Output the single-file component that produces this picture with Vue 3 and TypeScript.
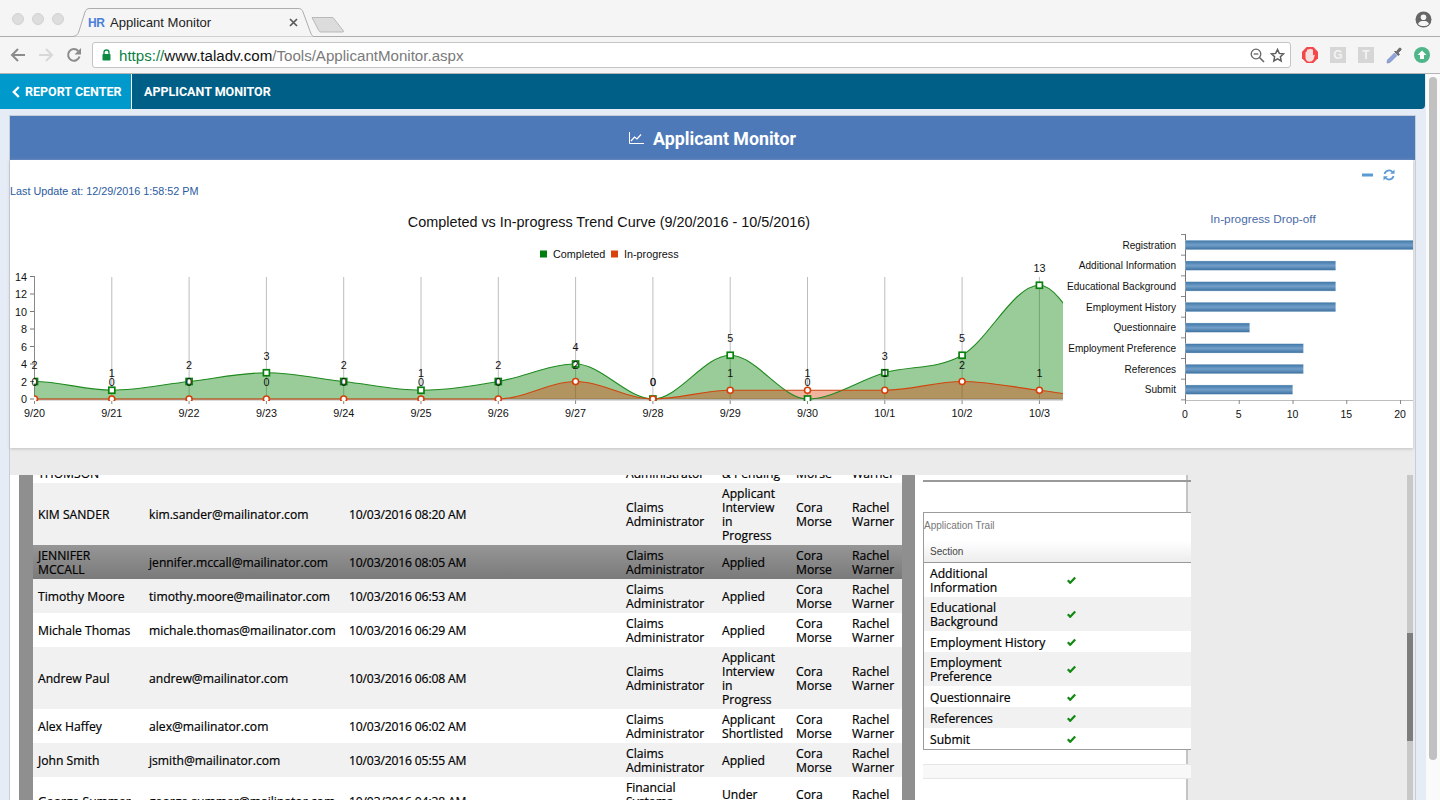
<script setup lang="ts">
const X0 = 34.5, STEP = 77.3, Y0 = 399, UNIT = 8.75
const dates = ['9/20','9/21','9/22','9/23','9/24','9/25','9/26','9/27','9/28','9/29','9/30','10/1','10/2','10/3']
const completed = [2,1,2,3,2,1,2,4,0,5,0,3,5,13]
const inProgress = [0,0,0,0,0,0,0,2,0,1,1,1,2,1]
const px = (i: number) => X0 + STEP * i
const py = (v: number) => Y0 - UNIT * v

function spline(vals: number[]): string {
  const n = vals.length
  const m = vals.map((v, i) => {
    if (i === 0 || i === n - 1) return 0
    const a = v - vals[i - 1], b = vals[i + 1] - v
    if (a * b <= 0) return 0
    const s = Math.sign(a)
    return s * Math.min((Math.abs(a) + Math.abs(b)) / 2, 3 * Math.min(Math.abs(a), Math.abs(b)))
  })
  let d = `M${px(0)} ${py(vals[0])}`
  for (let i = 0; i < n - 1; i++) {
    d += ` C${px(i) + STEP / 3} ${py(vals[i] + m[i] / 3)} ${px(i + 1) - STEP / 3} ${py(vals[i + 1] - m[i + 1] / 3)} ${px(i + 1)} ${py(vals[i + 1])}`
  }
  return d
}
const greenLine = spline([...completed, 4])
const redLine = spline([...inProgress, 0])
const close = ` L${px(14)} ${Y0} L${px(0)} ${Y0} Z`
const greenArea = greenLine + close
const redArea = redLine + close

const yTicks = [0, 2, 4, 6, 8, 10, 12, 14]
const dropoff = [
  { name: 'Registration', v: 26 },
  { name: 'Additional Information', v: 14 },
  { name: 'Educational Background', v: 14 },
  { name: 'Employment History', v: 14 },
  { name: 'Questionnaire', v: 6 },
  { name: 'Employment Preference', v: 11 },
  { name: 'References', v: 11 },
  { name: 'Submit', v: 10 }
]
const BX = 1185, BU = 10.75
const barY = (i: number) => 245 + 20.67 * i
const barTicks = [0,1,2,3,4,5,6,7,8].map(i => 234.5 + 20.67 * i)

interface Row { name: string; email: string; date: string; role: string; status: string; rec: string; mgr: string; cls?: string }
const base = { role: 'Claims\nAdministrator', rec: 'Cora\nMorse', mgr: 'Rachel\nWarner' }
const interview = 'Applicant\nInterview\nin\nProgress'
const rows: Row[] = [
  { ...base, name: 'MARK\nTHOMSON', email: 'mark.thomson@mailinator.com', date: '10/03/2016 09:10 AM', status: 'Selected\n& Pending', cls: 'plain' },
  { ...base, name: 'KIM SANDER', email: 'kim.sander@mailinator.com', date: '10/03/2016 08:20 AM', status: interview, cls: 'alt' },
  { ...base, name: 'JENNIFER\nMCCALL', email: 'jennifer.mccall@mailinator.com', date: '10/03/2016 08:05 AM', status: 'Applied', cls: 'sel' },
  { ...base, name: 'Timothy Moore', email: 'timothy.moore@mailinator.com', date: '10/03/2016 06:53 AM', status: 'Applied', cls: 'alt' },
  { ...base, name: 'Michale Thomas', email: 'michale.thomas@mailinator.com', date: '10/03/2016 06:29 AM', status: 'Applied', cls: 'plain' },
  { ...base, name: 'Andrew Paul', email: 'andrew@mailinator.com', date: '10/03/2016 06:08 AM', status: interview, cls: 'alt' },
  { ...base, name: 'Alex Haffey', email: 'alex@mailinator.com', date: '10/03/2016 06:02 AM', status: 'Applicant\nShortlisted', cls: 'plain' },
  { ...base, name: 'John Smith', email: 'jsmith@mailinator.com', date: '10/03/2016 05:55 AM', status: 'Applied', cls: 'alt' },
  { ...base, name: 'George Summer', email: 'george.summer@mailinator.com', date: '10/03/2016 04:38 AM', role: 'Financial\nSystems\nAnalyst', status: 'Under\nReview', cls: 'plain' }
]
const trail = ['Additional\nInformation', 'Educational\nBackground', 'Employment History', 'Employment\nPreference', 'Questionnaire', 'References', 'Submit']
</script>

<template>
  <div class="window">
    <header class="tabstrip">
      <div class="lights"><i></i><i></i><i></i></div>
      <div class="tab">
        <svg class="tab-shape" width="242" height="29" viewBox="0 0 242 29"><path d="M0.5 28.5 C5 28 6 26 7 23 L13 4 C14 1.5 15 0.5 18 0.5 H226 C229 0.5 230 1.5 231 4 L238 23 C239 26 240 28 241.500 28.500" fill="#f5f5f5" stroke="#adadad"/></svg>
        <span class="favicon">HR</span>
        <span class="tab-title">Applicant Monitor</span>
        <svg class="tab-x" width="9" height="9" viewBox="0 0 9 9"><path d="M1 1L8 8M8 1L1 8" stroke="#5a5a5a" stroke-width="1.700"/></svg>
      </div>
      <svg class="newtab" width="34" height="17" viewBox="0 0 34 17"><path d="M1 1.500 H22 L32.500 15 Q33 16 31 16 H10 Q8.500 16 8 15 Z" fill="#dcdcdc" stroke="#b9b9b9"/></svg>
      <svg class="account" width="17" height="17" viewBox="0 0 17 17"><circle cx="8.500" cy="8.500" r="8" fill="#666"/><circle cx="8.500" cy="6.300" r="2.800" fill="#f5f5f5"/><path d="M3 13 C4 10.500 6 10 8.500 10 C11 10 13 10.500 14 13 C12.500 14.700 10.500 15 8.500 15 C6.500 15 4.500 14.700 3 13Z" fill="#f5f5f5"/></svg>
    </header>
    <div class="toolbar">
      <svg class="nav-ic" width="16" height="16" viewBox="0 0 16 16"><path d="M15 8H2.500M8 2L2 8l6 6" fill="none" stroke="#8c8c8c" stroke-width="2"/></svg>
      <svg class="nav-ic fwd" width="16" height="16" viewBox="0 0 16 16"><path d="M1 8h12.500M8 2l6 6-6 6" fill="none" stroke="#d8d8d8" stroke-width="2"/></svg>
      <svg class="nav-ic rel" width="16" height="16" viewBox="0 0 16 16"><path d="M13.500 9.500A5.800 5.800 0 1 1 12.200 4" fill="none" stroke="#8c8c8c" stroke-width="2"/><path d="M15 1v6.500H8.500z" fill="#8c8c8c"/></svg>
      <div class="omnibox">
        <svg width="9" height="12" viewBox="0 0 9 12"><path d="M2 5V3.500a2.500 2.500 0 0 1 5 0V5" fill="none" stroke="#0b8a43" stroke-width="1.300"/><rect x="0.500" y="5" width="8" height="6.500" rx="0.800" fill="#0b8a43"/></svg>
        <span class="url"><span class="u-g">https://</span><span class="u-b">www.taladv.com</span><span class="u-m">/Tools/ApplicantMonitor.aspx</span></span>
        <svg class="zoom-ic" width="15" height="15" viewBox="0 0 15 15"><circle cx="6" cy="6" r="4.800" fill="none" stroke="#666" stroke-width="1.300"/><path d="M9.500 9.500L14 14" stroke="#666" stroke-width="1.600"/><path d="M3.700 6h4.600" stroke="#666" stroke-width="1.300"/></svg>
        <svg width="15" height="15" viewBox="0 0 15 15"><path d="M7.500 1.500l1.800 3.900 4.200.5-3.100 2.900.8 4.200-3.700-2.100-3.700 2.100.8-4.200L1.500 5.900l4.200-.5z" fill="none" stroke="#5f5f5f" stroke-width="1.500"/></svg>
      </div>
      <div class="exts">
        <svg width="16" height="16" viewBox="0 0 16 16"><path d="M4.700 0h6.600L16 4.700v6.600L11.300 16H4.700L0 11.300V4.700z" fill="#f4474a"/><path d="M3.500 6 Q3.500 4.500 4.800 4.500 L5 2.800 Q6 1.800 7 2.500 Q8 1 9.300 2.300 Q10.800 2 11 3.500 V8.500 Q12 7.500 12.800 8 L11.500 12.500 Q10 14.800 7.500 14.800 Q3.800 14.500 3.500 10.500Z" fill="#f6dfdf"/></svg>
        <span class="gbox g1">G</span>
        <span class="gbox g2">T</span>
        <svg class="drop" width="17" height="17" viewBox="0 0 17 17"><path d="M1 16l.5-3L8.500 6l2.500 2.500L4 15.500z" fill="#8ea3dc" stroke="#7e8bb5" stroke-width="0.700"/><path d="M8.500 4.500l4 4 1-1L12 5.800 15 3 15 1.500 13.500 1 10.500 4.500z" fill="#6c6c6c" stroke="#6c6c6c"/></svg>
        <svg class="up" width="16" height="16" viewBox="0 0 16 16"><circle cx="8" cy="8" r="8" fill="#4fb68a"/><path d="M8 3.500l4.500 4.500H10v4H6V8H3.500z" fill="#fff"/></svg>
      </div>
    </div>

    <div class="page">
      <div class="content">
        <nav class="topnav">
          <div class="crumb">
            <svg width="8" height="12" viewBox="0 0 8 12"><path d="M6.800 1L1.800 6l5 5" fill="none" stroke="#fff" stroke-width="2.400"/></svg>
            <span>REPORT CENTER</span>
          </div>
          <div class="nav-title">APPLICANT MONITOR</div>
        </nav>
        <section class="panel">
          <div class="panel-head">
            <svg width="15" height="12" viewBox="0 0 15 12"><path d="M.5 0v11.500H15" fill="none" stroke="#fff"/><path d="M2 9l3.500-4 2.500 2 4-4.500" fill="none" stroke="#fff" stroke-width="1.200"/></svg>
            <h1>Applicant Monitor</h1>
          </div>
          <div class="card">
            <div class="tools">
              <svg width="11" height="4" viewBox="0 0 11 4"><rect width="11" height="3" y="0.500" fill="#5b9bd5"/></svg>
              <svg width="12" height="12" viewBox="0 0 12 12"><path d="M1.500 5A4.600 4.600 0 0 1 9.600 3.200" fill="none" stroke="#5b9bd5" stroke-width="1.700"/><path d="M11.500 .5v4.300H7.200z" fill="#5b9bd5"/><path d="M10.500 7A4.600 4.600 0 0 1 2.400 8.800" fill="none" stroke="#5b9bd5" stroke-width="1.700"/><path d="M.5 11.500V7.200h4.300z" fill="#5b9bd5"/></svg>
            </div>
            <div class="updated">Last Update at: 12/29/2016 1:58:52 PM</div>
            <div class="charts">
              <svg class="trend" width="1053" height="225" viewBox="10 200 1053 225">
                <defs>
                  <clipPath id="plot"><rect x="34" y="270" width="1029" height="131"/></clipPath>
                </defs>
                <text x="609" y="227" text-anchor="middle" class="c-title">Completed vs In-progress Trend Curve (9/20/2016 - 10/5/2016)</text>
                <rect x="540" y="250.500" width="7" height="7" fill="#007f0e"/>
                <text x="553" y="258" class="c-t">Completed</text>
                <rect x="611" y="250.500" width="7" height="7" fill="#d8420c"/>
                <text x="624" y="258" class="c-t">In-progress</text>

                <line v-for="(d, i) in dates" :key="'g' + d" :x1="px(i)" :x2="px(i)" y1="277" y2="399" stroke="#bdbdbd"/>
                <line v-for="(d, i) in dates" :key="'t' + d" :x1="px(i)" :x2="px(i)" y1="399" y2="404" stroke="#888"/>
                <line x1="34.500" x2="34.500" y1="276" y2="400" stroke="#8a8a8a"/>
                <line v-for="t in yTicks" :key="'yt' + t" x1="30" x2="34" :y1="py(t)" :y2="py(t)" stroke="#777"/>
                <line x1="34" x2="1063" y1="399.500" y2="399.500" stroke="#b5b5b5" stroke-width="2"/>

                <g clip-path="url(#plot)">
                  <path :d="greenArea" fill="#008000" fill-opacity="0.4"/>
                  <path :d="redArea" fill="#d8420c" fill-opacity="0.4"/>
                  <path :d="greenLine" fill="none" stroke="#1f8a1f" stroke-width="1.100"/>
                  <path :d="redLine" fill="none" stroke="#d0460f" stroke-width="1.200"/>
                  <rect v-for="(v, i) in completed" :key="'s' + i" :x="px(i) - 3" :y="py(v) - 3" width="6" height="6" fill="#fff" stroke="#0a810f" stroke-width="1.700"/>
                  <circle v-for="(v, i) in inProgress" :key="'c' + i" :cx="px(i)" :cy="py(v)" r="3" fill="#fff" stroke="#d63f0a" stroke-width="1.600"/>
                </g>

                <text v-for="(v, i) in completed" :key="'l' + i" :x="px(i)" :y="py(v) - 13" text-anchor="middle" class="c-t">{{ v }}</text>
                <text v-for="(v, i) in inProgress" :key="'m' + i" :x="px(i)" :y="py(v) - 13" text-anchor="middle" class="c-t">{{ v }}</text>
                <text v-for="t in yTicks" :key="'yl' + t" x="27" :y="py(t) + 4" text-anchor="end" class="c-t">{{ t }}</text>
                <text v-for="(d, i) in dates" :key="'x' + d" :x="px(i)" y="417" text-anchor="middle" class="c-t">{{ d }}</text>
              </svg>
              <svg class="drop-chart" width="350" height="225" viewBox="1063 200 350 225">
                <defs>
                  <linearGradient id="bar" x1="0" y1="0" x2="0" y2="1">
                    <stop offset="0" stop-color="#3f78a8"/>
                    <stop offset="0.5" stop-color="#739fc9"/>
                    <stop offset="1" stop-color="#3d72a1"/>
                  </linearGradient>
                </defs>
                <text x="1263" y="223" text-anchor="middle" class="d-title">In-progress Drop-off</text>
                <line x1="1185.500" x2="1185.500" y1="234" y2="400" stroke="#777"/>
                <line v-for="t in barTicks" :key="t" x1="1181" x2="1185" :y1="t" :y2="t" stroke="#888"/>
                <line x1="1185" x2="1413" y1="400.500" y2="400.500" stroke="#bdbdbd"/>
                <line v-for="n in [0,5,10,15,20]" :key="'bt' + n" :x1="BX + BU * n + 0.500" :x2="BX + BU * n + 0.500" y1="400" y2="404" stroke="#888"/>
                <g v-for="(b, i) in dropoff" :key="b.name">
                  <rect :x="BX + 0.500" :y="barY(i) - 5" :width="b.v * BU" height="10" fill="#dfe8f0"/>
                  <rect :x="BX + 0.500" :y="barY(i) - 4.500" :width="b.v * BU - 0.500" height="9" fill="url(#bar)"/>
                  <text x="1176" :y="barY(i) + 3.500" text-anchor="end" class="d-t">{{ b.name }}</text>
                </g>
                <text v-for="n in [0,5,10,15,20]" :key="'bl' + n" :x="BX + BU * n" y="418" text-anchor="middle" class="d-v">{{ n }}</text>
              </svg>
            </div>
          </div>
          <div class="lower">
            <div class="gutter"></div>
            <div class="strip"></div>
            <div class="list">
              <table class="grid">
                <colgroup><col style="width:111px"/><col style="width:200px"/><col style="width:277px"/><col style="width:96px"/><col style="width:74px"/><col style="width:56px"/><col style="width:55px"/></colgroup>
                <tbody>
                  <tr v-for="r in rows" :key="r.email" :class="r.cls">
                    <td>{{ r.name }}</td>
                    <td>{{ r.email }}</td>
                    <td class="date">{{ r.date }}</td>
                    <td>{{ r.role }}</td>
                    <td>{{ r.status }}</td>
                    <td>{{ r.rec }}</td>
                    <td>{{ r.mgr }}</td>
                  </tr>
                </tbody>
              </table>
            </div>
            <div class="strip second"></div>
            <aside class="side">
              <div class="side-rule"></div>
              <div class="trail">
                <div class="trail-cap">Application Trail</div>
                <div class="trail-head">Section</div>
                <table class="trail-table">
                  <colgroup><col style="width:137px"/><col/></colgroup>
                  <tbody>
                    <tr v-for="t in trail" :key="t">
                      <td class="trail-name">{{ t }}</td>
                      <td><svg class="check" width="9" height="8" viewBox="0 0 9 8"><path d="M.8 4.300L3.200 6.800 8.200 1.500" fill="none" stroke="#128a12" stroke-width="2.200"/></svg></td>
                    </tr>
                  </tbody>
                </table>
              </div>
              <div class="side-bar"></div>
            </aside>
            <div class="track"><div class="thumb"></div></div>
          </div>
        </section>
      </div>
      <div class="vscroll"><div class="vthumb"></div></div>
    </div>
  </div>
</template>

<style>
html, body { margin: 0; overflow: hidden; }
</style>

<style scoped>
.window { width: 1440px; height: 800px; display: flex; flex-direction: column; overflow: hidden; font-family: "Liberation Sans", Arial, sans-serif; background: #f5f5f5; }
.tabstrip { height: 36px; display: flex; align-items: flex-end; border-bottom: 1px solid #adadad; background: #f5f5f5; flex: none; }
.lights { display: flex; gap: 8px; padding: 0 0 11px 12px; width: 60px; box-sizing: border-box; align-self: flex-end; }
.lights i { width: 12px; height: 12px; border-radius: 50%; background: #dddddd; border: 0.5px solid #d2d2d2; box-sizing: border-box; flex: none; }
.tab { position: relative; width: 242px; height: 29px; margin-left: 12px; margin-bottom: -1px; display: flex; align-items: center; padding: 0 16px 0 16px; box-sizing: border-box; }
.tab-shape { position: absolute; left: 0; top: 0; }
.favicon { position: relative; font: bold 12px "Liberation Sans", sans-serif; color: #4b7fd8; width: 22px; letter-spacing: -0.5px; }
.tab-title { position: relative; font-size: 13.100px; color: #222; flex: 1; }
.tab-x { position: relative; }
.newtab { margin: 0 0 3px -3px; }
.account { margin: 0 8px 8.500px auto; align-self: flex-end; }
.toolbar { height: 36px; flex: none; display: flex; align-items: center; background: #f5f5f5; }
.nav-ic { margin-left: 10px; flex: none; }
.nav-ic.fwd { margin-left: 12px; }
.nav-ic.rel { margin-left: 12px; }
.omnibox { width: 1199px; height: 26px; margin-left: 10px; background: #fff; border: 1px solid #c4c4c4; border-radius: 3px; display: flex; align-items: center; gap: 8px; padding: 0 5px 0 9px; box-sizing: border-box; flex: none; }
.url { font-size: 15.100px; flex: 1; white-space: nowrap; }
.u-g { color: #0b8043; }
.u-b { color: #111; }
.u-m { color: #7a7a7a; }
.zoom-ic { margin-right: -3px; }
.exts { display: flex; align-items: center; margin-left: 11px; }
.gbox { width: 16px; height: 16px; background: #d6d6d6; color: #f3f3f3; font: bold 12px/16px "Liberation Sans", sans-serif; text-align: center; }
.g1 { margin-left: 12px; }
.g2 { margin-left: 12px; }
.drop { margin-left: 12px; }
.up { margin-left: 11px; }

.page { flex: 1; display: flex; min-height: 0; border-top: 1px solid #b4b4b4; }
.content { width: 1426px; background: #e6ecf5; display: flex; flex-direction: column; min-height: 0; }
.topnav { height: 35px; margin: 0 1px 0 0; background: #005f86; border-radius: 0 0 4px 0; display: flex; color: #fff; font: 700 12.500px Roboto, sans-serif; flex: none; }
.crumb { width: 119px; background: #0099cc; display: flex; align-items: center; gap: 5px; padding-left: 12px; border-right: 1px solid #fff; }
.nav-title { display: flex; align-items: center; padding-left: 12px; }
.panel { flex: 1; min-height: 0; margin: 6px 10px 0 9px; border: 1px solid #c6ced9; border-bottom: 0; display: flex; flex-direction: column; background: #ebebeb; }
.panel-head { height: 44px; background: #4e79b8; display: flex; align-items: center; justify-content: center; gap: 9px; color: #fff; flex: none; }
.panel-head h1 { font: 700 17.800px Roboto, sans-serif; margin: 0; }
.card { width: 1403px; height: 288px; background: #fff; box-shadow: 0 1px 3px #c0c0c0; flex: none; }
.tools { display: flex; justify-content: flex-end; align-items: center; gap: 10px; padding: 9px 18px 0 0; height: 12px; }
.updated { font-size: 10.800px; color: #2a5aa0; margin-top: 4px; line-height: 12px; }
.charts { display: flex; margin-top: 3px; }
.charts svg { display: block; flex: none; }
.c-title { font: 14.400px "Liberation Sans", sans-serif; fill: #111; }
.c-t { font: 10.800px "Liberation Sans", sans-serif; fill: #111; }
.d-title { font: 11.800px "Liberation Sans", sans-serif; fill: #4a6aa8; }
.d-t { font: 10.050px "Liberation Sans", sans-serif; fill: #111; }
.d-v { font: 10.500px "Liberation Sans", sans-serif; fill: #111; }
.lower { flex: 1; min-height: 0; margin-top: 27px; display: flex; overflow: hidden; background: #ebebeb; }
.gutter { width: 9px; background: #fff; flex: none; }
.strip { width: 14px; background: #8f8f8f; flex: none; }
.strip.second { width: 13px; }
.list { width: 869px; flex: none; overflow: hidden; background: #fff; }
.grid { width: 869px; table-layout: fixed; border-collapse: collapse; margin-top: -26px; font: 12.150px/14px "Open Sans", sans-serif; color: #000; -webkit-text-stroke: 0.2px #000; }
.grid td { padding: 4px 5px 2px; vertical-align: middle; white-space: pre-line; }
.grid .date { letter-spacing: -0.16px; }
.grid .alt { background: #f1f1f1; }
.grid .plain { background: #fff; }
.grid .sel { background: linear-gradient(#969696, #7a7a7a); }
.side { width: 271px; background: #fff; flex: none; border-right: 2px solid #c4c4c4; }
.side-rule { height: 2px; width: 268px; margin: 5px 0 0 8px; background: #9a9a9a; }
.trail { position: relative; width: 268px; margin: 30px 0 0 8px; border: 1px solid #9c9c9c; border-right: 0; background: #fff; box-sizing: border-box; }
.trail-cap { font-size: 10px; line-height: 12px; color: #777; padding: 7px 0 9px 0; }
.trail-head { height: 22px; line-height: 21px; font-size: 10px; color: #444; padding-left: 6px; background: linear-gradient(#ffffff, #ededed); border-bottom: 1px solid #999; box-sizing: border-box; }
.trail-table { width: 267px; border-collapse: collapse; table-layout: fixed; font: 12.150px/14px "Open Sans", sans-serif; color: #000; -webkit-text-stroke: 0.2px #000; }
.trail-table td { padding: 3px 0 3px 6px; height: 15px; vertical-align: middle; white-space: pre-line; }
.trail-table .trail-name { padding: 4px 0 2px 6px; }
.trail-table tr:nth-child(even) { background: #f1f1f1; }
.check { display: block; }
.side-bar { position: relative; width: 268px; height: 13px; margin: 14px 0 0 8px; background: #f8f8f8; border-top: 1px solid #e6e6e6; border-bottom: 1px solid #e6e6e6; }
.track { width: 6px; background: #c8c8c8; margin-left: auto; margin-right: 2px; flex: none; }
.thumb { height: 108px; margin-top: 158px; background: #7d7d7d; }
.vscroll { flex: 1; background: #fafafa; padding: 3px 3px 0 3px; }
.vthumb { height: 683px; background: #c1c1c1; border-radius: 5px; }
</style>
